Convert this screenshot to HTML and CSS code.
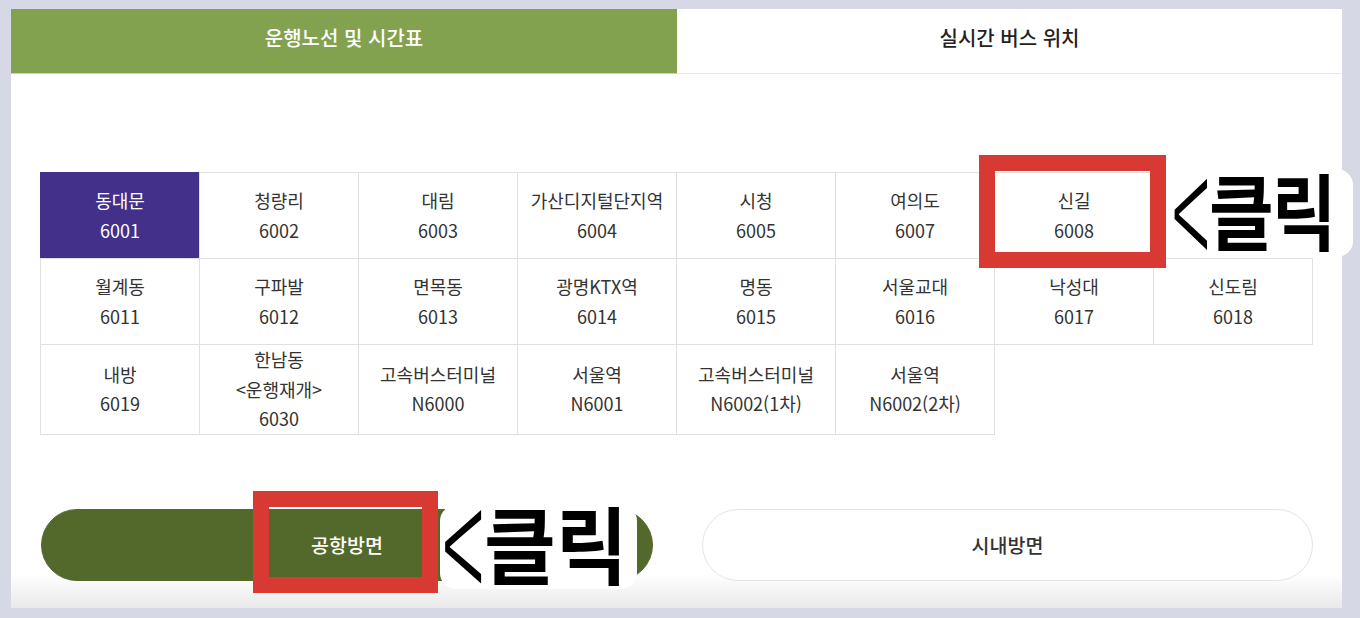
FILE: index.html
```html
<!DOCTYPE html>
<html lang="ko">
<head>
<meta charset="utf-8">
<title>운행노선 및 시간표</title>
<link rel="stylesheet" href="styles.css">
</head>
<body>
<div class="page">
  <div class="tabs">
    <div class="tab active">운행노선 및 시간표</div>
    <div class="tab">실시간 버스 위치</div>
  </div>
  <div class="content">
    <ul class="routes">
      <li class="route selected"><span>동대문</span><span>6001</span></li>
      <li class="route"><span>청량리</span><span>6002</span></li>
      <li class="route"><span>대림</span><span>6003</span></li>
      <li class="route"><span>가산디지털단지역</span><span>6004</span></li>
      <li class="route"><span>시청</span><span>6005</span></li>
      <li class="route"><span>여의도</span><span>6007</span></li>
      <li class="route"><span>신길</span><span>6008</span></li>
      <li class="route new-row"><span>월계동</span><span>6011</span></li>
      <li class="route"><span>구파발</span><span>6012</span></li>
      <li class="route"><span>면목동</span><span>6013</span></li>
      <li class="route"><span>광명KTX역</span><span>6014</span></li>
      <li class="route"><span>명동</span><span>6015</span></li>
      <li class="route"><span>서울교대</span><span>6016</span></li>
      <li class="route"><span>낙성대</span><span>6017</span></li>
      <li class="route"><span>신도림</span><span>6018</span></li>
      <li class="route"><span>내방</span><span>6019</span></li>
      <li class="route"><span>한남동</span><span>&lt;운행재개&gt;</span><span>6030</span></li>
      <li class="route"><span>고속버스터미널</span><span>N6000</span></li>
      <li class="route"><span>서울역</span><span>N6001</span></li>
      <li class="route"><span>고속버스터미널</span><span>N6002(1차)</span></li>
      <li class="route"><span>서울역</span><span>N6002(2차)</span></li>
    </ul>
    <div class="directions">
      <button class="dir airport">공항방면</button>
      <button class="dir city">시내방면</button>
    </div>
  </div>
  <div class="mark mark-1"></div>
  <div class="note note-1"><span class="chev">&lt;</span><span class="word">클릭</span></div>
  <div class="mark mark-2"></div>
  <div class="note note-2"><span class="chev">&lt;</span><span class="word">클릭</span></div>
</div>
</body>
</html>
```

FILE: styles.css
```css
* { box-sizing: border-box; }
html, body { margin: 0; padding: 0; }
body {
  width: 1360px;
  height: 618px;
  overflow: hidden;
  background: #d6d8e5;
  padding: 9px 18px 10px 11px;
  font-family: "Noto Sans CJK KR", "Noto Sans", sans-serif;
  color: #333;
}
.page {
  position: relative;
  width: 1331px;
  height: 599px;
  background: #fff;
  display: flex;
  flex-direction: column;
}
.tabs {
  display: flex;
  height: 65px;
}
.tab {
  flex: 1 1 0;
  display: flex;
  align-items: center;
  justify-content: center;
  font-size: 20px;
  font-weight: 500;
  color: #222;
  border-bottom: 1px solid #e6e6e6;
  padding-bottom: 8px;
}
.tab.active {
  flex: 0 0 666px;
  background: #83a24f;
  color: #fff;
  border-bottom-color: #c9d3bb;
}
.content {
  flex: 1;
  padding: 99px 29px 0 30px;
  background: linear-gradient(to bottom, #fff calc(100% - 34px), #e9e9e9);
}
.routes {
  list-style: none;
  margin: 0;
  padding: 0;
  display: grid;
  grid-template-columns: repeat(8, 159px);
  grid-auto-rows: minmax(86px, auto);
}
.route {
  margin: -1px 0 0 -1px;
  border: 1px solid #e0e0e0;
  display: flex;
  flex-direction: column;
  align-items: center;
  justify-content: center;
  font-size: 18px;
  line-height: 29.5px;
  color: #333;
  padding: 0;
}
.route.new-row { grid-column-start: 1; }
.route.selected {
  background: #42308a;
  border-color: #42308a;
  color: #fff;
}
.directions {
  display: flex;
  justify-content: space-between;
  margin-top: 74px;
}
.dir {
  height: 72px;
  border-radius: 36px;
  font-family: inherit;
  font-size: 19.5px;
  font-weight: 500;
  cursor: pointer;
}
.dir.airport {
  width: 612px;
  background: #52692b;
  border: 1px solid #52692b;
  color: #fff;
}
.dir.city {
  width: 611px;
  background: #fff;
  border: 1px solid #e4e4e4;
  color: #333;
}
.mark {
  position: absolute;
  border: 16px solid #d93933;
}
.mark-1 { left: 968px; top: 146px; width: 187px; height: 113px; }
.mark-2 { left: 242px; top: 482px; width: 185px; height: 102px; }
.note {
  position: absolute;
  background: #fff;
  border-radius: 16px;
  color: #000;
  font-weight: 700;
  line-height: 1;
  display: flex;
  align-items: center;
  white-space: nowrap;
}
.note .word { display: inline-block; }
.note .chev {
  display: inline-block;
  font-weight: 300;
  text-align: center;
  line-height: 0.45;
  transform-origin: 50% calc(50% + 4px);
}
.note-1 {
  left: 1156px; top: 160px; width: 186px; height: 88px;
  padding: 0 0 10px 4px; border-radius: 0 16px 16px 0;
  font-size: 74px;
}
.note-1 .chev { width: 38px; transform: scale(0.95, 2.3); }
.note-1 .word { letter-spacing: -2px; transform: scale(0.95, 1.12); transform-origin: left center; }
.note-2 {
  left: 429px; top: 496px; width: 197px; height: 84px;
  padding: 0 0 12px 2px; font-size: 78px;
}
.note-2 .chev { width: 42px; transform: scale(1, 2.25); }
.note-2 .word { transform: scaleY(1.08); }
```
